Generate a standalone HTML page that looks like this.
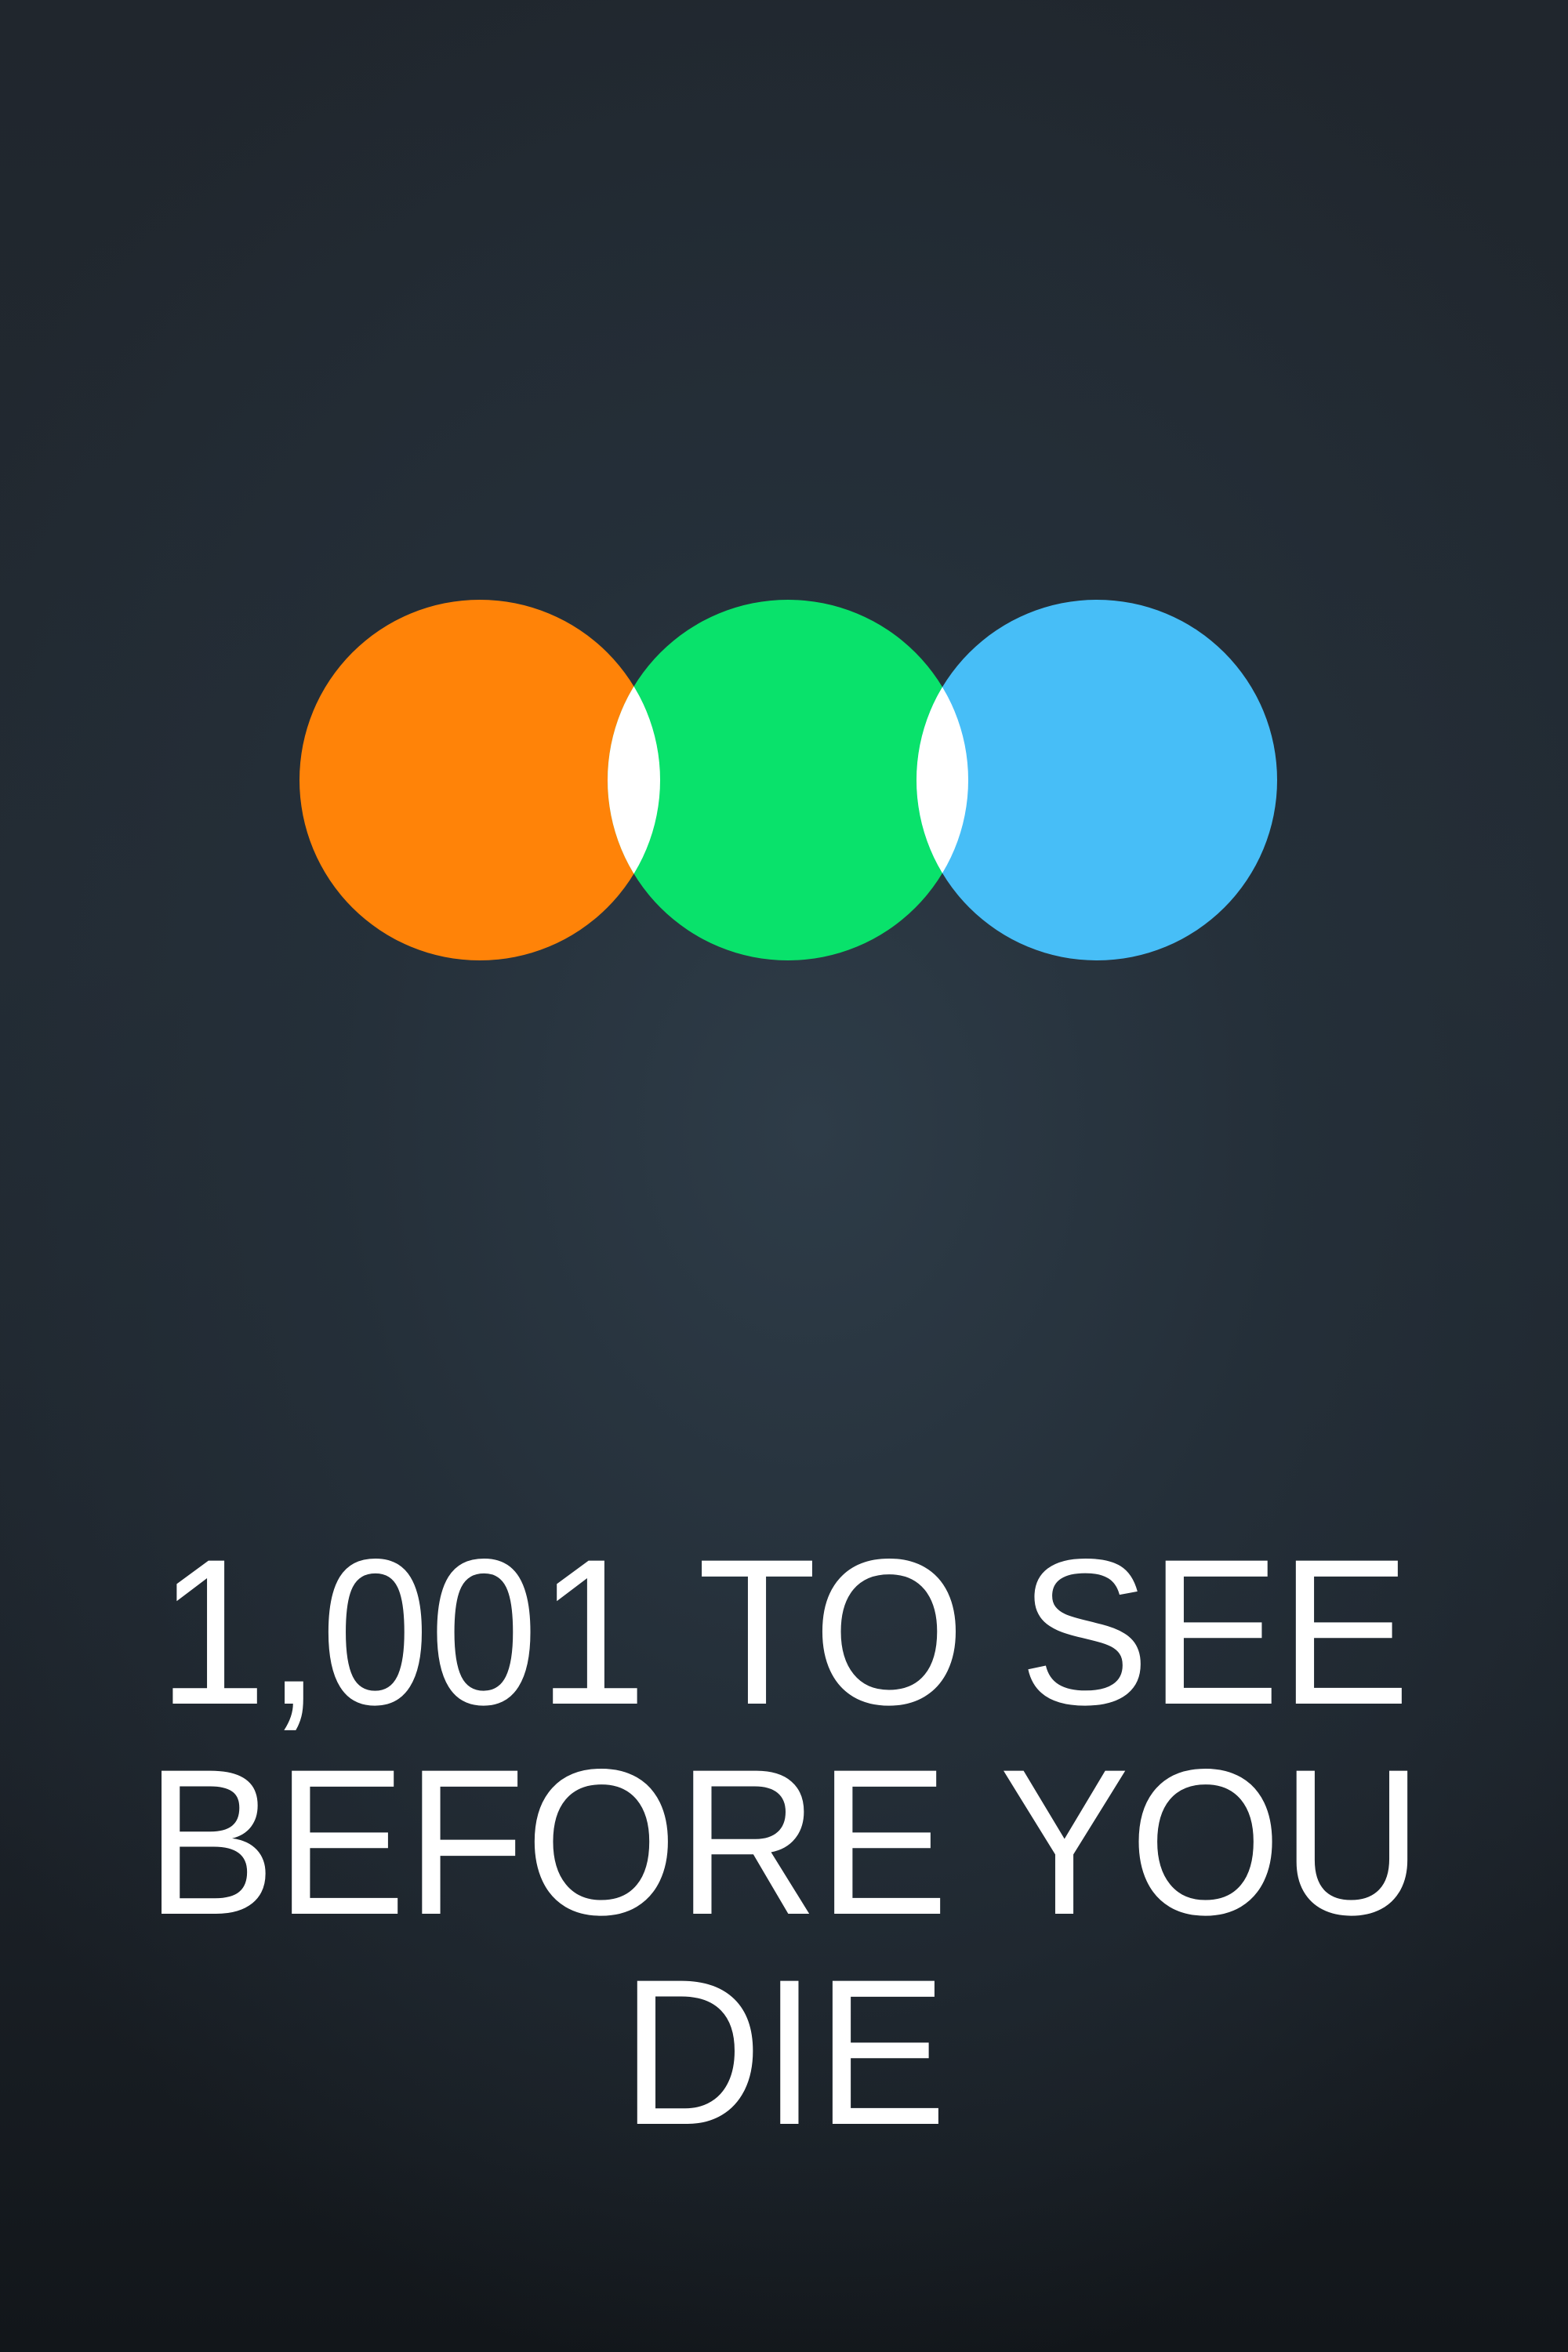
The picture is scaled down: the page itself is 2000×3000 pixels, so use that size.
<!DOCTYPE html>
<html><head><meta charset="utf-8"><style>
html,body{margin:0;padding:0}
body{width:2000px;height:3000px;overflow:hidden;position:relative;
background:radial-gradient(ellipse 1500px 1900px at 1034px 1440px,rgba(46,60,72,1) 0%,rgba(37,48,58,0.9) 40%,rgba(30,37,45,0) 85%),linear-gradient(#20262d 0%,#222a32 40%,#1c2229 75%,#12161a 100%);
font-family:"Liberation Sans",sans-serif;}
svg{position:absolute;left:0;top:0}
.t{position:absolute;left:0;width:2000px;text-align:center;color:#fff;font-size:265px;line-height:268px;transform:scaleX(0.94);transform-origin:1000px 0}
</style></head><body>
<svg width="2000" height="3000">
<defs>
<clipPath id="co"><circle cx="612" cy="995" r="230"/></clipPath>
<clipPath id="cb"><circle cx="1399" cy="995" r="230"/></clipPath>
</defs>
<circle cx="612" cy="995" r="230" fill="#ff8308"/>
<circle cx="1005" cy="995" r="230" fill="#09e26b"/>
<circle cx="1399" cy="995" r="230" fill="#47bef7"/>
<circle cx="1005" cy="995" r="230" fill="#fff" clip-path="url(#co)"/>
<circle cx="1005" cy="995" r="230" fill="#fff" clip-path="url(#cb)"/>
</svg>
<div class="t" style="top:1948px">1,001 TO SEE<br>BEFORE YOU<br>DIE</div>
</body></html>
